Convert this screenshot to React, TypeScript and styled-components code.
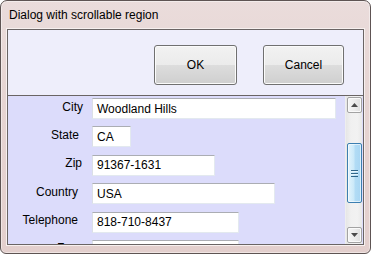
import React from "react";
import styled, { createGlobalStyle } from "styled-components";

const GlobalStyle = createGlobalStyle`
  html, body { margin: 0; padding: 0; background: #ffffff; }
  body { font-family: "Liberation Sans", Arial, sans-serif; }
  * { box-sizing: border-box; }
`;

const Window = styled.div`
  width: 371px;
  height: 254px;
  border: 1px solid #5e5453;
  border-radius: 7px 7px 6px 6px;
  background: linear-gradient(to bottom, #eadcdb 0%, #e6d4d2 40%, #e3cfcd 100%);
  box-shadow: inset 0 0 0 1px rgba(255, 255, 255, 0.45);
  display: flex;
  flex-direction: column;
  padding: 0 6px 8px 6px;
`;

const TitleBar = styled.div`
  height: 28px;
  display: flex;
  align-items: center;
  padding: 0 0 1px 2px;
  font-size: 12px;
  line-height: 14px;
  color: #000;
`;

const Client = styled.div`
  flex: 1;
  display: flex;
  flex-direction: column;
  border: 1px solid #6a6464;
  box-shadow: 0 0 0 1px #f7f0ef;
  background: #eeeefb;
  min-height: 0;
`;

const ButtonPanel = styled.div`
  height: 65px;
  flex: none;
  display: flex;
  justify-content: flex-end;
  align-items: flex-start;
  gap: 26px;
  padding: 15px 19px 0 0;
`;

const PushButton = styled.div<{ $w: number }>`
  width: ${(p) => p.$w}px;
  height: 40px;
  border: 1px solid #707070;
  border-radius: 3px;
  background: linear-gradient(to bottom, #f2f2f2 0%, #ebebeb 50%, #dddddd 50%, #cfcfcf 100%);
  box-shadow: inset 0 0 0 1px #fbfbfb;
  display: flex;
  align-items: center;
  justify-content: center;
  font-size: 12px;
  line-height: 14px;
  color: #000;
`;

const ScrollRegion = styled.div`
  flex: 1;
  display: flex;
  border-top: 1px solid #6a6464;
  background: #dcdcfb;
  overflow: hidden;
  min-height: 0;
`;

const Form = styled.div`
  flex: 1;
  display: grid;
  grid-template-columns: 76px 1fr;
  column-gap: 8px;
  row-gap: 7.4px;
  align-content: start;
  padding-top: 2px;
  overflow: hidden;
`;

const Label = styled.div<{ $pr: number }>`
  text-align: right;
  padding-right: ${(p) => p.$pr}px;
  padding-top: 1.5px;
  font-size: 12px;
  line-height: 14px;
  color: #000;
  white-space: nowrap;
`;

const Field = styled.div<{ $w: number }>`
  width: ${(p) => p.$w}px;
  height: 21px;
  background: #ffffff;
  border: 1px solid #e3e9ef;
  border-top-color: #abadb3;
  border-left-color: #dbdfe6;
  display: flex;
  align-items: center;
  padding-left: 4px;
  font-size: 12px;
  line-height: 14px;
  color: #000;
  white-space: nowrap;
`;

const ScrollBar = styled.div`
  width: 17px;
  flex: none;
  display: flex;
  flex-direction: column;
  align-items: center;
  background: linear-gradient(to right, #e6e6e6 0%, #f0f0f0 30%, #f2f2f2 70%, #e9e9e9 100%);
  border-left: 1px solid #eeeeee;
  margin-right: 1px;
`;

const ArrowButton = styled.div<{ $top?: boolean }>`
  width: 15px;
  height: 16px;
  flex: none;
  margin-top: ${(p) => (p.$top ? "1px" : "0")};
  margin-bottom: ${(p) => (p.$top ? "0" : "1px")};
  border: 1px solid #a3a3a3;
  border-radius: 2px;
  background: linear-gradient(to right, #f5f5f5 0%, #ececec 50%, #dedede 100%);
  box-shadow: inset 0 0 0 1px #fafafa;
  display: flex;
  align-items: center;
  justify-content: center;
`;

const Thumb = styled.div`
  width: 15px;
  height: 60px;
  flex: none;
  margin-top: 30px;
  border: 1px solid #3c7fb1;
  border-radius: 2px;
  background: linear-gradient(to right, #e3f4fc 0%, #cbe9f9 45%, #b2dcf5 55%, #a8d6f3 100%);
  box-shadow: inset 0 0 0 1px rgba(255, 255, 255, 0.6);
  display: flex;
  align-items: center;
  justify-content: center;
`;

const Spacer = styled.div`
  flex: 1;
`;

const Arrow = ({ up }: { up?: boolean }) => (
  <svg width="7" height="4" viewBox="0 0 7 4">
    {up ? (
      <path d="M0 4 L3.5 0 L7 4 Z" fill="#4a4a4a" />
    ) : (
      <path d="M0 0 L7 0 L3.5 4 Z" fill="#4a4a4a" />
    )}
  </svg>
);

const Grip = () => (
  <svg width="7" height="7" viewBox="0 0 7 7">
    <rect x="0" y="0" width="7" height="1" fill="#2f6588" />
    <rect x="0" y="1" width="7" height="1" fill="#e6f5fd" />
    <rect x="0" y="3" width="7" height="1" fill="#2f6588" />
    <rect x="0" y="4" width="7" height="1" fill="#e6f5fd" />
    <rect x="0" y="6" width="7" height="1" fill="#2f6588" />
  </svg>
);

const rows = [
  { label: "City", pr: 1, w: 244, value: "Woodland Hills" },
  { label: "State", pr: 5, w: 39, value: "CA" },
  { label: "Zip", pr: 2, w: 123, value: "91367-1631" },
  { label: "Country", pr: 6, w: 183, value: "USA" },
  { label: "Telephone", pr: 6, w: 147, value: "818-710-8437" },
  { label: "Fax", pr: 7, w: 147, value: "" },
];

export default function App() {
  return (
    <>
      <GlobalStyle />
      <Window>
        <TitleBar>Dialog with scrollable region</TitleBar>
        <Client>
          <ButtonPanel>
            <PushButton $w={83}>OK</PushButton>
            <PushButton $w={81}>Cancel</PushButton>
          </ButtonPanel>
          <ScrollRegion>
            <Form>
              {rows.map((r) => (
                <React.Fragment key={r.label}>
                  <Label $pr={r.pr}>{r.label}</Label>
                  <Field $w={r.w}>{r.value}</Field>
                </React.Fragment>
              ))}
            </Form>
            <ScrollBar>
              <ArrowButton $top>
                <Arrow up />
              </ArrowButton>
              <Thumb>
                <Grip />
              </Thumb>
              <Spacer />
              <ArrowButton>
                <Arrow />
              </ArrowButton>
            </ScrollBar>
          </ScrollRegion>
        </Client>
      </Window>
    </>
  );
}
